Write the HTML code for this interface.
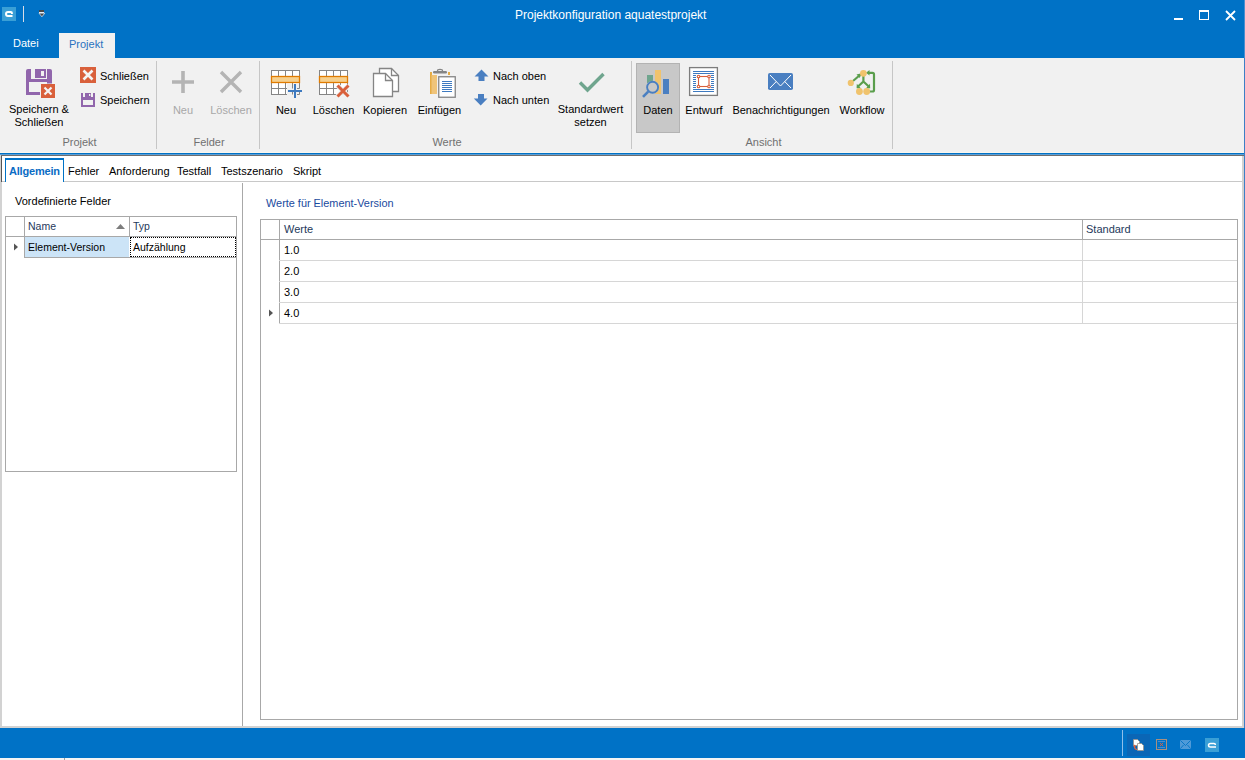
<!DOCTYPE html>
<html><head><meta charset="utf-8">
<style>
*{margin:0;padding:0;box-sizing:border-box}
html,body{width:1245px;height:760px;overflow:hidden;background:#fff;font-family:"Liberation Sans",sans-serif;font-size:11px;color:#000}
.a{position:absolute}
.t{position:absolute;white-space:nowrap;line-height:1}
#title{left:0;top:0;width:1245px;height:58px;background:#0072c6}
#ribbon{left:0;top:58px;width:1245px;height:95px;background:#f1f1f1}
.sep{position:absolute;width:1px;background:#c6c6c6;top:61px;height:88px}
.grp{position:absolute;top:137px;padding-left:2px;color:#707070;font-size:11px;white-space:nowrap;line-height:1}
.btn{position:absolute;color:#000;white-space:nowrap;line-height:1}
.dis{color:#a8a8a8}
#content{left:0;top:155px;width:1245px;height:573px;background:#fff}
#status{left:0;top:728px;width:1245px;height:30px;background:#0072c6}
.grid{position:absolute;border:1px solid #a0a0a0;background:#fff}
.hl{position:absolute;background:#a0a0a0}
.rl{position:absolute;background:#d6d6d6}
.gt{position:absolute;white-space:nowrap;line-height:1;font-size:11px;color:#000}
</style></head><body>
<div id="title" class="a">
<div class="a" style="left:2px;top:7px;width:14px;height:14px;background:#3a9fd6"></div>
<svg class="a" style="left:2px;top:7px" width="14" height="14"><path d="M9.9 7 V6 Q9.9 5 8.9 5 H6 Q4 5 4 7 Q4 9 6 9 H10.5" fill="none" stroke="#fff" stroke-width="2"/></svg>
<div class="a" style="left:23px;top:6px;width:1px;height:16px;background:#d7dce6"></div>
<div class="a" style="left:39px;top:10px;width:5px;height:2px;background:#474747"></div><div class="a" style="left:39px;top:12px;width:5px;height:1px;background:#e8eef6"></div>
<svg class="a" style="left:38px;top:12px" width="8" height="7"><path d="M1 1.2 L6.8 1.2 L3.9 4.8 Z" fill="#474747" stroke="#e8eef6" stroke-width="0.7"/></svg>
<div class="t" style="left:515px;top:9px;font-size:12px;color:#fff">Projektkonfiguration aquatestprojekt</div>
<div class="a" style="left:1174px;top:18px;width:9px;height:2px;background:#fff"></div>
<div class="a" style="left:1199px;top:10px;width:10px;height:10px;border:1px solid #fff;border-top-width:2px"></div>
<svg class="a" style="left:1225px;top:10px" width="11" height="11"><path d="M1 1 L10 10 M10 1 L1 10" stroke="#fff" stroke-width="1.8"/></svg>
<div class="a" style="left:1244px;top:0;width:1px;height:58px;background:#4a8fd0"></div>
<div class="t" style="left:13px;top:38px;color:#fff;font-size:11px">Datei</div>
<div class="a" style="left:59px;top:33px;width:56px;height:25px;background:#f1f1f1"></div>
<div class="t" style="left:69px;top:39px;color:#2a72c0;font-size:11px">Projekt</div>
</div>
<div id="ribbon" class="a">
</div>
<div class="sep" style="left:156px"></div>
<div class="sep" style="left:259px"></div>
<div class="sep" style="left:631px"></div>
<div class="sep" style="left:892px"></div>
<div class="a" style="left:636px;top:63px;width:44px;height:70px;background:#c8c8c8;border:1px solid #b3b3b3"></div>
<!-- texts -->
<div class="btn" style="left:0;width:78px;text-align:center;top:104px">Speichern &amp;</div>
<div class="btn" style="left:0;width:78px;text-align:center;top:117px">Schließen</div>
<div class="btn" style="left:100px;top:71px">Schließen</div>
<div class="btn" style="left:100px;top:95px">Speichern</div>
<div class="btn dis" style="left:163px;width:40px;text-align:center;top:105px">Neu</div>
<div class="btn dis" style="left:206px;width:50px;text-align:center;top:105px">Löschen</div>
<div class="btn" style="left:266px;width:40px;text-align:center;top:105px">Neu</div>
<div class="btn" style="left:308px;width:51px;text-align:center;top:105px">Löschen</div>
<div class="btn" style="left:360px;width:50px;text-align:center;top:105px">Kopieren</div>
<div class="btn" style="left:412px;width:55px;text-align:center;top:105px">Einfügen</div>
<div class="btn" style="left:493px;top:71px">Nach oben</div>
<div class="btn" style="left:493px;top:95px">Nach unten</div>
<div class="btn" style="left:550px;width:81px;text-align:center;top:104px">Standardwert</div>
<div class="btn" style="left:550px;width:81px;text-align:center;top:117px">setzen</div>
<div class="btn" style="left:636px;width:44px;text-align:center;top:105px">Daten</div>
<div class="btn" style="left:682px;width:44px;text-align:center;top:105px">Entwurf</div>
<div class="btn" style="left:728px;width:106px;text-align:center;top:105px">Benachrichtigungen</div>
<div class="btn" style="left:836px;width:52px;text-align:center;top:105px">Workflow</div>
<div class="grp" style="left:0;width:157px;text-align:center">Projekt</div>
<div class="grp" style="left:157px;width:102px;text-align:center">Felder</div>
<div class="grp" style="left:260px;width:372px;text-align:center">Werte</div>
<div class="grp" style="left:632px;width:261px;text-align:center">Ansicht</div>
<svg class="a" style="left:0;top:0" width="1245" height="760" viewBox="0 0 1245 760">
<!-- Speichern & Schliessen big -->
<g fill="#9166ac">
<path d="M28 69 H31 V79 H26 V71 Q26 69 28 69 Z"/>
<rect x="26" y="79" width="26" height="3"/>
<rect x="26" y="79" width="3" height="16"/>
<rect x="26" y="92" width="14" height="3"/>
<path d="M47 69 H50 Q52 69 52 71 V84 H47 Z"/>
<path d="M35 69 H46 V78 H35 Z M41 71 V76 H44 V71 Z" fill-rule="evenodd"/>
</g>
<rect x="40.5" y="83.5" width="15" height="15" fill="#f4f4f4"/>
<rect x="41" y="84" width="14" height="14" fill="#d9603b"/>
<path d="M44.5 87.5 L51.5 94.5 M51.5 87.5 L44.5 94.5" stroke="#f4f4f4" stroke-width="2.2"/>
<!-- small close -->
<rect x="80" y="67" width="16" height="16" fill="#d9603b"/>
<path d="M83.5 70.5 L92.5 79.5 M92.5 70.5 L83.5 79.5" stroke="#f4f4f4" stroke-width="2.6"/>
<!-- small save -->
<g fill="#9166ac">
<path d="M81 93 H95 V107 H81 Z M83 100 V105 H93 V100 Z" fill-rule="evenodd"/>
</g>
<path d="M83 93 V97 H85 V93 Z M91 93 V97 H93 V93 Z" fill="#f1f1f1"/>
<rect x="89" y="94" width="1.3" height="2" fill="#f1f1f1"/>
<!-- disabled plus / x -->
<path d="M183 71 V93 M172 82 H194" stroke="#b4b4b4" stroke-width="3.6"/>
<path d="M221 72 L241 92 M241 72 L221 92" stroke="#b4b4b4" stroke-width="3.4"/>
<!-- table new -->
<g id="tbl1">
<rect x="271.5" y="70.5" width="28" height="24" fill="#fff" stroke="#858585"/>
<path d="M278.5 70.5 V94.5 M285.5 70.5 V94.5 M292.5 70.5 V94.5 M271.5 88.5 H299.5" stroke="#858585"/>
<rect x="271.5" y="76.5" width="28" height="6" fill="#f6d08d" stroke="#e07b00" stroke-width="1.3"/>
</g>
<rect x="287" y="84" width="15" height="14" fill="#f1f1f1"/>
<path d="M292.5 88.5 V84 M299.5 84 V88.5 H297 M292.5 94.5 V92 M299.5 92 V94.5 H297" stroke="#858585" fill="none"/>
<path d="M295 84 V98 M288 91 H302" stroke="#3e7ac0" stroke-width="2"/>
<!-- table delete -->
<rect x="319.5" y="70.5" width="28" height="24" fill="#fff" stroke="#858585"/>
<path d="M326.5 70.5 V94.5 M333.5 70.5 V94.5 M340.5 70.5 V94.5 M319.5 88.5 H347.5" stroke="#858585"/>
<rect x="319.5" y="76.5" width="28" height="6" fill="#f6d08d" stroke="#e07b00" stroke-width="1.3"/>
<path d="M337.5 85.5 L348.5 96.5 M348.5 85.5 L337.5 96.5" stroke="#f1f1f1" stroke-width="5"/>
<path d="M337.5 85.5 L348.5 96.5 M348.5 85.5 L337.5 96.5" stroke="#d9603b" stroke-width="3"/>
<!-- copy -->
<path d="M379.5 68.5 H391.5 L398.5 75.5 V91.5 H379.5 Z" fill="#fff" stroke="#858585" stroke-width="1.3"/>
<path d="M391.5 68.5 V75.5 H398.5" fill="none" stroke="#858585" stroke-width="1.3"/>
<path d="M373.5 73.5 H385.5 L392.5 80.5 V96.5 H373.5 Z" fill="#fff" stroke="#858585" stroke-width="1.3"/>
<path d="M385.5 73.5 V80.5 H392.5" fill="none" stroke="#858585" stroke-width="1.3"/>
<!-- paste -->
<rect x="430" y="72" width="20" height="22" fill="#efc47a"/>
<rect x="430" y="72" width="1.5" height="22" fill="#e6ac45"/>
<rect x="432" y="70" width="16" height="5" fill="#f1f1f1"/>
<rect x="430" y="72" width="2" height="3" fill="#e6ac45"/>
<rect x="448" y="72" width="2" height="3" fill="#e6ac45"/>
<rect x="433" y="71" width="14" height="2.6" rx="1.3" fill="#858585"/>
<path d="M437.5 71.5 V70.5 Q437.5 69.3 440 69.3 Q442.5 69.3 442.5 70.5 V71.5" fill="none" stroke="#858585" stroke-width="1.2"/>
<rect x="437" y="75" width="20" height="23" fill="#f1f1f1"/>
<rect x="438.75" y="76.75" width="16.5" height="20.5" fill="#fff" stroke="#858585" stroke-width="1.3"/>
<path d="M442 81.5 H452 M442 83.5 H452 M442 85.5 H452 M442 87.5 H452 M442 89.5 H452 M442 91.5 H452" stroke="#3e7ac0" stroke-width="1"/>
<!-- up/down arrows -->
<path d="M481.5 69.5 L488.5 76.5 H484.5 V81 H478.5 V76.5 H474.5 Z" fill="#4a7fc1"/>
<path d="M478 94 H484 V98.5 H487.5 L480.7 105.5 L473.8 98.5 H478 Z" fill="#4a7fc1"/>
<!-- check -->
<path d="M580 82.5 L587.5 90 L603.5 74" fill="none" stroke="#6fa58e" stroke-width="3.4"/>
<!-- Daten chart -->
<rect x="647" y="75" width="6" height="8" fill="#6fa58e"/>
<rect x="655" y="70" width="6" height="24" fill="#f0c36d"/>
<rect x="663" y="79" width="6" height="15" fill="#4a7fc1"/>
<circle cx="652.6" cy="87.3" r="6.5" fill="#c8c8c8"/>
<circle cx="652.6" cy="87.3" r="5.5" fill="none" stroke="#4a7fc1" stroke-width="1.9"/>
<path d="M648.2 91.7 L643 96.9" stroke="#4a7fc1" stroke-width="2.6"/>
<!-- Entwurf -->
<rect x="689.6" y="67.6" width="27.8" height="27.8" fill="#fff" stroke="#7d7d7d" stroke-width="1.3"/>
<path d="M693 71.5 H714 M693 73.5 H714 M693 89.5 H714 M693 91.5 H714 M693 75.5 H696 M693 77.5 H696 M693 79.5 H696 M693 81.5 H696 M693 83.5 H696 M693 85.5 H696 M693 87.5 H696 M711 75.5 H714 M711 77.5 H714 M711 79.5 H714 M711 81.5 H714 M711 83.5 H714 M711 85.5 H714 M711 87.5 H714" stroke="#3e7ac0" stroke-width="1"/>
<rect x="698.5" y="76.5" width="10.5" height="10" fill="none" stroke="#d9603b" stroke-width="1.1"/>
<g fill="#fff" stroke="#d9603b" stroke-width="1.1"><circle cx="698.5" cy="76.5" r="1.3"/><circle cx="709" cy="76.5" r="1.3"/><circle cx="698.5" cy="86.5" r="1.3"/><circle cx="709" cy="86.5" r="1.3"/></g>
<!-- mail -->
<rect x="768" y="73" width="25" height="17" rx="1.8" fill="#4a7fc1"/>
<path d="M770 75 L780.5 86 L791 75 M770 88 L776.3 81.5 M791 88 L784.7 81.5" fill="none" stroke="#fff" stroke-width="1"/>
<!-- workflow -->
<g fill="none" stroke="#5a9e4c" stroke-width="2.2">
<path d="M853 81 L860 75"/>
<path d="M863.4 75 V81.5 L858 86.5 M863.4 81.5 L868.8 86.5"/>
<path d="M867 91.5 H872.5 Q874 91.5 874 90 V74.5 Q874 72.8 872.5 72.8 H868"/>
</g>
<g fill="#5a9e4c">
<path d="M861.5 73.3 L856.5 74.5 L859.8 78 Z"/>
<path d="M856.8 83.8 L856.6 88.3 L861 88.4 Z"/>
<path d="M870 83.8 L870.2 88.3 L865.8 88.4 Z"/>
<path d="M866 72.8 L869.5 70 V75.6 Z"/>
</g>
<g fill="#f0c36d">
<circle cx="863.4" cy="73.3" r="3.4"/>
<circle cx="850.8" cy="82.9" r="3.1"/>
<circle cx="859.4" cy="91.5" r="3.4"/>
<circle cx="866.7" cy="91.5" r="3.4"/>
</g>
</svg>
<div class="a" style="left:0;top:152px;width:1245px;height:1px;background:#faf6ee"></div>
<div class="a" style="left:0;top:153px;width:1245px;height:1px;background:#0072c6"></div><div class="a" style="left:0;top:154px;width:1245px;height:1px;background:#5a9fd8"></div>

<div id="content" class="a"></div>
<div class="a" style="left:0;top:155px;width:2px;height:572px;background:#d2d2d2"></div>

<div class="a" style="left:1px;top:155px;width:1px;height:27px;background:#555"></div>
<div class="a" style="left:1px;top:155px;width:1243px;height:1px;background:#6e6e6e"></div>
<div class="a" style="left:1242px;top:156px;width:2px;height:571px;background:#d2d2d2"></div>
<div class="a" style="left:1244px;top:58px;width:1px;height:670px;background:#3c7fc6"></div>
<div class="a" style="left:0;top:726px;width:1244px;height:2px;background:#d2d2d2"></div>
<div class="a" style="left:2px;top:181px;width:1240px;height:1px;background:#c8c8c8"></div>
<div class="a" style="left:5px;top:158px;width:59px;height:24px;background:#fff;border:1px solid #0072c6;border-top-width:2px;border-bottom:none"></div>
<div class="t" style="left:9px;top:166px;font-weight:bold;color:#0a6cc4;font-size:11px;letter-spacing:-0.2px">Allgemein</div>
<div class="t" style="left:68px;top:166px">Fehler</div>
<div class="t" style="left:109px;top:166px">Anforderung</div>
<div class="t" style="left:177px;top:166px">Testfall</div>
<div class="t" style="left:221px;top:166px">Testszenario</div>
<div class="t" style="left:293px;top:166px">Skript</div>
<div class="a" style="left:242px;top:183px;width:1px;height:543px;background:#a8a8a8"></div>
<div class="t" style="left:15px;top:196px">Vordefinierte Felder</div>
<!-- left grid -->
<div class="a" style="left:5px;top:216px;width:232px;height:256px;border:1px solid #a8a8a8;background:#fff"></div>
<div class="a" style="left:5px;top:236px;width:232px;height:1px;background:#a8a8a8"></div>
<div class="a" style="left:24px;top:216px;width:1px;height:42px;background:#a8a8a8"></div>
<div class="a" style="left:129px;top:216px;width:1px;height:21px;background:#a8a8a8"></div>
<div class="a" style="left:25px;top:237px;width:104px;height:20px;background:#cce4f7"></div>
<div class="a" style="left:24px;top:257px;width:213px;height:1px;background:#a8a8a8"></div>
<div class="a" style="left:130px;top:237px;width:106px;height:20px;border:1px dotted #000"></div>
<div class="gt" style="left:28px;top:221px;color:#1e395b;font-size:10.5px">Name</div>
<div class="gt" style="left:133px;top:221px;color:#1e395b;font-size:10.5px">Typ</div>
<svg class="a" style="left:115px;top:222px" width="12" height="8"><path d="M1 7 H10 L5.5 2 Z" fill="#7d7d7d"/></svg>
<div class="gt" style="left:28px;top:242px;font-size:10.5px">Element-Version</div>
<div class="gt" style="left:133px;top:242px;font-size:10.5px">Aufzählung</div>
<svg class="a" style="left:13px;top:242px" width="6" height="10"><path d="M1 1.5 L5 5 L1 8.5 Z" fill="#555"/></svg>
<!-- right panel -->
<div class="t" style="left:266px;top:198px;color:#1a4a9e;font-size:10.9px">Werte für Element-Version</div>
<div class="a" style="left:260px;top:219px;width:978px;height:501px;border:1px solid #a8a8a8;background:#fff"></div>
<div class="a" style="left:260px;top:239px;width:978px;height:1px;background:#a8a8a8"></div>
<div class="a" style="left:279px;top:219px;width:1px;height:105px;background:#a8a8a8"></div>
<div class="a" style="left:1082px;top:219px;width:1px;height:105px;background:#a8a8a8"></div>
<div class="a" style="left:279px;top:260px;width:958px;height:1px;background:#d6d6d6"></div>
<div class="a" style="left:279px;top:281px;width:958px;height:1px;background:#d6d6d6"></div>
<div class="a" style="left:279px;top:302px;width:958px;height:1px;background:#d6d6d6"></div>
<div class="a" style="left:279px;top:323px;width:958px;height:1px;background:#d6d6d6"></div>
<div class="a" style="left:1082px;top:240px;width:1px;height:84px;background:#d6d6d6"></div>
<div class="gt" style="left:284px;top:224px;color:#1e395b">Werte</div>
<div class="gt" style="left:1086px;top:224px;color:#1e395b">Standard</div>
<div class="gt" style="left:284px;top:245px">1.0</div>
<div class="gt" style="left:284px;top:266px">2.0</div>
<div class="gt" style="left:284px;top:287px">3.0</div>
<div class="gt" style="left:284px;top:308px">4.0</div>
<svg class="a" style="left:268px;top:308px" width="6" height="10"><path d="M1 1.5 L5 5 L1 8.5 Z" fill="#555"/></svg>

<div id="status" class="a"></div>
<div class="a" style="left:0;top:758px;width:1245px;height:2px;background:#f4f4f4"></div>
<div class="a" style="left:64px;top:758px;width:1px;height:2px;background:#a0a0a0"></div>
<div class="a" style="left:1122px;top:730px;width:1px;height:26px;background:#8fbfea"></div>
<div class="a" style="left:1127px;top:734px;width:23px;height:22px;background:#0a66b6"></div>
<svg class="a" style="left:0;top:0" width="1245" height="760" viewBox="0 0 1245 760">
<path d="M1133.5 739.5 H1137.5 L1139.5 741.5 V745.5 H1133.5 Z" fill="#fff" stroke="#9a8f88" stroke-width="0.8"/>
<path d="M1137.5 743.5 H1141.5 L1143.5 745.5 V750.5 H1137.5 Z" fill="#fff" stroke="#9a8f88" stroke-width="0.8"/>
<path d="M1134.5 745.5 Q1134.5 749.5 1137 749.5" fill="none" stroke="#e8623a" stroke-width="1.2"/>
<path d="M1133 746.5 L1134.5 744.5 L1136 746.5 Z" fill="#e8623a"/>
<rect x="1156.5" y="739.5" width="10" height="10" fill="none" stroke="#a89080" stroke-width="1"/>
<path d="M1158 741.5 H1165 M1158 747.5 H1165" stroke="#5b8fcf" stroke-width="0.8"/>
<path d="M1160 743 L1163 746 M1163 743 L1160 746" stroke="#e8623a" stroke-width="0.9"/>
<g opacity="0.5"><rect x="1180" y="740" width="11" height="9" rx="1" fill="#9ec3ea"/>
<path d="M1180.5 740.5 L1185.5 745.5 L1190.5 740.5 M1180.5 748.5 L1183.5 745 M1190.5 748.5 L1187.5 745" stroke="#0072c6" stroke-width="0.9" fill="none"/></g>
<rect x="1205" y="738" width="14" height="14" fill="#3a9fd6"/>
<path d="M1215.4 745 Q1215.4 743.6 1214 743.6 H1210.5 Q1208.5 743.6 1208.5 745.35 Q1208.5 747.1 1210.5 747.1 H1216" fill="none" stroke="#fff" stroke-width="1.5"/>
</svg>

</body></html>
